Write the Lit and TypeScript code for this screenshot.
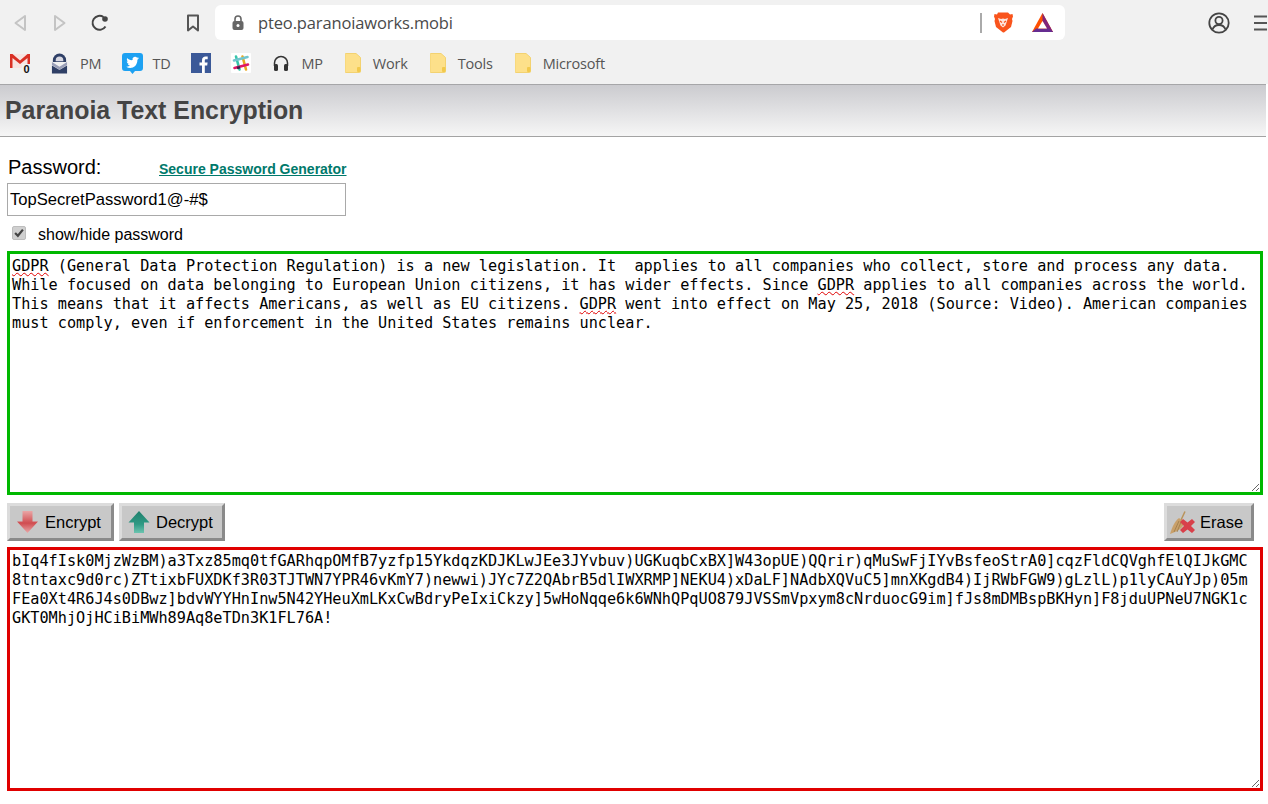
import { LitElement, css, html, svg } from 'lit';
import { customElement } from 'lit/decorators.js';

const RED_LINES = [
	'bIq4fIsk0MjzWzBM)a3Txz85mq0tfGARhqpOMfB7yzfp15YkdqzKDJKLwJEe3JYvbuv)UGKuqbCxBX]W43opUE)QQrir)qMuSwFjIYvBsfeoStrA0]cqzFldCQVghfElQIJkGMC',
	'8tntaxc9d0rc)ZTtixbFUXDKf3R03TJTWN7YPR46vKmY7)newwi)JYc7Z2QAbrB5dlIWXRMP]NEKU4)xDaLF]NAdbXQVuC5]mnXKgdB4)IjRWbFGW9)gLzlL)p1lyCAuYJp)05m',
	'FEa0Xt4R6J4s0DBwz]bdvWYYHnInw5N42YHeuXmLKxCwBdryPeIxiCkzy]5wHoNqqe6k6WNhQPqUO879JVSSmVpxym8cNrduocG9im]fJs8mDMBspBKHyn]F8jduUPNeU7NGK1c',
	'GKT0MhjOjHCiBiMWh89Aq8eTDn3K1FL76A!'
];

const GREEN_LINES = [
	'GDPR (General Data Protection Regulation) is a new legislation. It  applies to all companies who collect, store and process any data.',
	'While focused on data belonging to European Union citizens, it has wider effects. Since GDPR applies to all companies across the world.',
	'This means that it affects Americans, as well as EU citizens. GDPR went into effect on May 25, 2018 (Source: Video). American companies',
	'must comply, even if enforcement in the United States remains unclear.'
];

const folder = svg`<svg width="16" height="20" viewBox="0 0 16 20">
	<path d="M1 0.500h10l4.500 4v14a1 1 0 0 1-1 1h-13.500a1 1 0 0 1-1-1v-17a1 1 0 0 1 1-1z" fill="#fde08a" stroke="#f3d271"/>
	<rect x="12" y="14" width="3.500" height="5" rx="1" fill="#f2c94c"/>
</svg>`;

@customElement('app-root')
export class AppRoot extends LitElement {
	static styles = css`
		:host {
			display: block;
			width: 1268px;
			height: 804px;
			overflow: hidden;
			background: #fff;
			font-family: "Liberation Sans", Arial, sans-serif;
			color: #000;
		}
		.chrome {
			background: #f1f1f1;
			height: 84px;
			display: flex;
			flex-direction: column;
			overflow: hidden;
		}
		.toolbar {
			display: flex;
			align-items: center;
			height: 35px;
			margin-top: 5px;
			padding-left: 13px;
			flex: none;
		}
		.toolbar svg { flex: none; display: block; }
		.tb-forward { margin-left: 26px; }
		.tb-reload { margin-left: 24px; }
		.tb-bookmark { margin-left: 77px; }
		.tb-user { margin-left: 143px; }
		.tb-menu { margin-left: 24px; }
		.urlbar {
			margin-left: 15px;
			width: 850px;
			height: 35px;
			background: #fff;
			border-radius: 6px;
			display: flex;
			align-items: center;
			padding-left: 17px;
			box-sizing: border-box;
			flex: none;
		}
		.url {
			font-family: "Open Sans", sans-serif;
			font-size: 16.500px;
			letter-spacing: -0.13px;
			color: #4a4a4a;
			margin-left: 14px;
			width: 722px;
		}
		.sep { width: 2px; height: 20px; background: #aaa; flex: none; }
		.urlbar .brave { margin-left: 11px; }
		.urlbar .bat { margin-left: 19px; }
		.bookmarks {
			display: flex;
			align-items: center;
			height: 22px;
			margin-top: 12px;
			font-family: "Open Sans", sans-serif;
			font-size: 14.500px;
			letter-spacing: -0.2px;
			color: #555;
			padding-left: 10px;
		}
		.bm { display: flex; align-items: center; flex: none; gap: 12px; }
		.bm svg { display: block; flex: none; }
		.bm-pm { margin-left: 20px; }
		.bm-td { margin-left: 21px; gap: 9px; }
		.bm-fb { margin-left: 21px; }
		.bm-slack { margin-left: 20px; }
		.bm-mp { margin-left: 22px; }
		.bm-work { margin-left: 22px; }
		.bm-tools { margin-left: 22px; }
		.bm-ms { margin-left: 22px; }
		.page-title {
			height: 53px;
			width: 1266px;
			box-sizing: border-box;
			border-top: 1px solid #a6a6a8;
			border-bottom: 1px solid #a3a3a3;
			background: linear-gradient(#cbcbcf, #f6f6f6);
			display: flex;
			align-items: center;
			padding-left: 5px;
			font-size: 24.900px;
			font-weight: bold;
			color: #444;
		}
		.form {
			padding: 19px 0 0 7px;
			width: 1256px;
		}
		.pw-row {
			display: flex;
			align-items: baseline;
			height: 27px;
			padding-left: 1px;
		}
		.pw-label { font-size: 20px; width: 151px; }
		.pw-link {
			font-size: 14px;
			font-weight: bold;
			color: #00796b;
			text-decoration: underline;
		}
		.pw-input {
			width: 339px;
			height: 33px;
			box-sizing: border-box;
			border: 1px solid #a9a9a9;
			display: flex;
			align-items: center;
			padding-left: 2px;
			font-size: 16.600px;
			margin-bottom: 7px;
		}
		.show {
			display: flex;
			align-items: center;
			height: 24px;
			font-size: 16px;
			padding-left: 5px;
			margin-bottom: 4px;
		}
		.check {
			width: 14px;
			height: 14px;
			box-sizing: border-box;
			background: #d0d0d0;
			border: 1px solid #bdbdbd;
			border-radius: 2px;
			margin: -4px 12px 0 0;
			display: flex;
			align-items: center;
			justify-content: center;
		}
		.area {
			box-sizing: border-box;
			width: 1256px;
			height: 244px;
			padding: 3px 2px;
			overflow: hidden;
			resize: both;
			font-family: "DejaVu Sans Mono", monospace;
			font-size: 15.215px;
			line-height: 19px;
			white-space: pre;
		}
		.green { border: 3px solid #00b800; }
		.red { border: 3px solid #e00000; padding-top: 2px; }
		.spell {
			text-decoration: underline wavy #e00000 1px;
			text-underline-offset: 1px;
		}
		.actions {
			display: flex;
			align-items: center;
			gap: 5px;
			height: 38px;
			margin: 8px 0 6px;
			padding-right: 9px;
		}
		.btn {
			box-sizing: border-box;
			height: 38px;
			display: flex;
			align-items: center;
			background: #c8c8c8;
			border: 3px solid;
			border-color: #dcdcdc #8a8a8a #8a8a8a #dcdcdc;
			font-size: 16.500px;
			padding-left: 6px;
			gap: 6px;
		}
		.btn svg { display: block; flex: none; }
		.btn-encrypt { width: 107px; }
		.btn-decrypt { width: 106px; }
		.btn-erase { width: 90px; padding-left: 3px; gap: 3px; }
		.spacer { flex: 1; }
	`;

	renderLine(line: string) {
		// the misspelling squiggle sits under every GDPR, so split on it
		const parts = line.split('GDPR');
		return html`<div>${parts.map((p, i) => html`${i > 0 ? html`<span class="spell">GDPR</span>` : ''}${p}`)}</div>`;
	}

	render() {
		return html`
			<div class="chrome">
				<div class="toolbar">
					<svg width="14" height="18" viewBox="0 0 14 18"><path d="M12 2L2.500 9L12 16z" fill="none" stroke="#c4c4c4" stroke-width="2" stroke-linejoin="round"/></svg>
					<svg class="tb-forward" width="14" height="18" viewBox="0 0 14 18"><path d="M2 2L11.500 9L2 16z" fill="none" stroke="#c4c4c4" stroke-width="2" stroke-linejoin="round"/></svg>
					<svg class="tb-reload" width="18" height="18" viewBox="0 0 18 18"><path d="M14.500 12.500A7 7 0 1 1 12.500 3" fill="none" stroke="#444" stroke-width="2"/><circle cx="14" cy="5" r="2.800" fill="#444"/></svg>
					<svg class="tb-bookmark" width="14" height="18" viewBox="0 0 14 18"><path d="M2 1.500h10v15l-5-4-5 4z" fill="none" stroke="#555" stroke-width="2" stroke-linejoin="round"/></svg>
					<div class="urlbar">
						<svg width="12" height="16" viewBox="0 0 12 16"><path d="M3 6V4a3 3 0 0 1 6 0v2" fill="none" stroke="#666" stroke-width="1.600"/><rect x="0.500" y="6" width="11" height="9" rx="2" fill="#666"/><circle cx="6" cy="10.500" r="1.500" fill="#fff"/></svg>
						<span class="url">pteo.paranoiaworks.mobi</span>
						<span class="sep"></span>
						<svg class="brave" width="20" height="21" viewBox="0 0 20 21">
							<path d="M5 0.500h10l2 2 2.500-.5.500 2.500-1 2.500.5 2-1.500 6-7 5.500h-1l-7-5.500-1.500-6 .5-2-1-2.500.5-2.500 2.500.5z" fill="#f9541c"/>
							<path d="M5 6l3 1 2-.5 2 .5 3-1-1.500 4.500-1 3-2.500 2-2.500-2-1-3z" fill="#fff" opacity=".85"/>
							<path d="M7 9l2 1.500M13 9l-2 1.500M10 12v2" stroke="#f9541c" stroke-width="1.200"/>
						</svg>
						<svg class="bat" width="21" height="19" viewBox="0 0 21 19">
							<path d="M10.500 0L0 19h21z" fill="#ff5000"/>
							<path d="M10.500 0L21 19h-4.500L10.500 8z" fill="#80247b"/>
							<path d="M0 19l4-3.500h13l4 3.500z" fill="#662d91"/>
							<path d="M10.500 8l-4.500 7.500h9z" fill="#fff"/>
						</svg>
					</div>
					<svg class="tb-user" width="22" height="22" viewBox="0 0 22 22"><circle cx="11" cy="11" r="9.700" fill="none" stroke="#444" stroke-width="1.800"/><circle cx="11" cy="8.500" r="3.600" fill="none" stroke="#444" stroke-width="1.800"/><path d="M4.500 17.500c1-3 3.500-4.500 6.500-4.500s5.500 1.500 6.500 4.500" fill="none" stroke="#444" stroke-width="1.800"/></svg>
					<svg class="tb-menu" width="13" height="16" viewBox="0 0 13 16"><path d="M0 1.500h13M0 8h13M0 14.500h13" stroke="#555" stroke-width="2"/></svg>
				</div>
				<div class="bookmarks">
					<div class="bm">
						<svg width="21" height="21" viewBox="0 0 21 21">
							<rect x="0" y="1" width="20" height="14" fill="#f7e4e2"/>
							<path d="M0 1h2.500L10 7.500 17.500 1H20v14h-2.500V5L10 11 2.500 5v10H0z" fill="#d93025"/>
							<rect x="12" y="11" width="9" height="10" fill="#f1f1f1"/>
							<text x="13.500" y="20" font-family="Liberation Sans" font-size="11" font-weight="bold" fill="#111">0</text>
						</svg>
					</div>
					<div class="bm bm-pm">
						<svg width="17" height="21" viewBox="0 0 18 21">
							<path d="M2 9V7a7 7 0 0 1 14 0v2z" fill="#2f3f66"/>
							<path d="M5 8V7a4 4 0 0 1 8 0v1z" fill="#d8d8e2"/>
							<path d="M1 9l8 5 8-5v3l-8 5-8-5z" fill="#9a9fb8"/>
							<path d="M1 12.500l8 5 8-5V21H1z" fill="#2f3f66"/>
						</svg>
						<span>PM</span>
					</div>
					<div class="bm bm-td">
						<svg width="21" height="21" viewBox="0 0 21 21">
							<path d="M3 0h15a3 3 0 0 1 3 3v12a3 3 0 0 1-3 3h-5l-2.500 3-2.500-3H3a3 3 0 0 1-3-3V3a3 3 0 0 1 3-3z" fill="#1da1f2"/>
							<path d="M17 5c-.5.300-1 .400-1.500.500.500-.300 1-.800 1.200-1.400-.500.300-1 .500-1.600.600a2.600 2.600 0 0 0-4.500 2.400C8.400 7.500 6.500 6.500 5.200 5c-.7 1.200-.3 2.700.8 3.500-.4 0-.8-.1-1.200-.3 0 1.300.9 2.400 2.100 2.600-.4.100-.8.100-1.200 0 .3 1 1.300 1.800 2.400 1.800-1.100.9-2.500 1.200-3.900 1.100 4.500 2.800 11.200.7 11.200-7 .6-.4 1.200-1 1.600-1.700z" fill="#fff"/>
						</svg>
						<span>TD</span>
					</div>
					<div class="bm bm-fb">
						<svg width="20" height="20" viewBox="0 0 20 20">
							<rect width="20" height="20" fill="#3b5998"/>
							<path d="M13.800 20v-7.500h2.400l.4-3h-2.800V7.700c0-.9.300-1.400 1.500-1.400h1.400V3.600c-.3 0-1.100-.1-2.100-.1-2.100 0-3.600 1.300-3.600 3.700v2.300H8.500v3H11V20z" fill="#fff"/>
						</svg>
					</div>
					<div class="bm bm-slack">
						<svg width="20" height="20" viewBox="0 0 20 20">
							<rect width="20" height="20" rx="1" fill="#fff"/>
							<path d="M5 3.500l3.500 13" stroke="#36c5ab" stroke-width="2.600" stroke-linecap="round"/>
							<path d="M11.500 3.500l3.500 13" stroke="#e9a820" stroke-width="2.600" stroke-linecap="round"/>
							<path d="M3 7.500l13.500-3.500" stroke="#72c5cd" stroke-width="2.600" stroke-linecap="round"/>
							<path d="M3.500 15l13.500-3.500" stroke="#e01765" stroke-width="2.600" stroke-linecap="round"/>
							<path d="M6 15l3-.8" stroke="#3f1d4a" stroke-width="2.600"/>
						</svg>
					</div>
					<div class="bm bm-mp">
						<svg width="16" height="17" viewBox="0 0 16 17">
							<path d="M1.500 11V8a6.500 6.500 0 0 1 13 0v3" fill="none" stroke="#333" stroke-width="1.500"/>
							<rect x="1" y="9" width="4" height="7" rx="1.500" fill="#333"/>
							<rect x="11" y="9" width="4" height="7" rx="1.500" fill="#333"/>
						</svg>
						<span>MP</span>
					</div>
					<div class="bm bm-work">${folder}<span>Work</span></div>
					<div class="bm bm-tools">${folder}<span>Tools</span></div>
					<div class="bm bm-ms">${folder}<span>Microsoft</span></div>
				</div>
			</div>
			<div class="page-title"><span>Paranoia Text Encryption</span></div>
			<div class="form">
				<div class="pw-row">
					<span class="pw-label">Password:</span>
					<span class="pw-link">Secure Password Generator</span>
				</div>
				<div class="pw-input">TopSecretPassword1@-#$</div>
				<div class="show">
					<span class="check">
						<svg width="10" height="10" viewBox="0 0 9 9"><path d="M1 4.500l2.500 2.500L8 1.500" fill="none" stroke="#444" stroke-width="2"/></svg>
					</span>
					<span>show/hide password</span>
				</div>
				<div class="area green">${GREEN_LINES.map(l => this.renderLine(l))}</div>
				<div class="actions">
					<div class="btn btn-encrypt">
						<svg width="23" height="22" viewBox="0 0 22 22">
							<defs><linearGradient id="down" x1="0" y1="0" x2="0" y2="1"><stop offset="0" stop-color="#eaa6a6"/><stop offset=".55" stop-color="#d04c50"/><stop offset="1" stop-color="#e8a8a8"/></linearGradient></defs>
							<path d="M6 0h10v10.500h5.500L11 22 .5 10.500H6z" fill="url(#down)"/>
						</svg>
						<span>Encrypt</span>
					</div>
					<div class="btn btn-decrypt">
						<svg width="22" height="22" viewBox="0 0 22 22">
							<defs><linearGradient id="up" x1="0" y1="0" x2="0" y2="1"><stop offset="0" stop-color="#1f7f6c"/><stop offset=".6" stop-color="#2f9a84"/><stop offset="1" stop-color="#6cc4b0"/></linearGradient></defs>
							<path d="M11 0l10.500 11.500H16V22H6V11.500H.5z" fill="url(#up)"/>
						</svg>
						<span>Decrypt</span>
					</div>
					<div class="spacer"></div>
					<div class="btn btn-erase">
						<svg width="27" height="25" viewBox="0 0 27 25">
							<path d="M15 1.500L11 10" stroke="#b8935a" stroke-width="1.500"/>
							<path d="M9 8l5 4c0 5-5 9-14 12 2-6 4-12 9-16z" fill="#c9a06a"/>
							<path d="M9 11l-5 11M11 12l-4 10" stroke="#9a7a48" stroke-width=".8"/>
							<path d="M13 9l4.500 3.500L22 9l3 3-4 4 4 4-3 3-4.500-3.500L13 23l-3-3 4-4-4-4z" fill="#d8404a"/>
						</svg>
						<span>Erase</span>
					</div>
				</div>
				<div class="area red">${RED_LINES.map(l => html`<div>${l}</div>`)}</div>
			</div>
		`;
	}
}
